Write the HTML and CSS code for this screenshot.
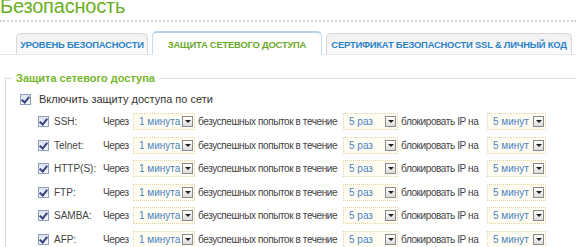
FILE: index.html
```html
<!DOCTYPE html>
<html lang="ru">
<head>
    <meta charset="UTF-8">
    <title>Безопасность</title>
    <link rel="stylesheet" href="styles.css">
</head>
<body>
    <h1 class="page-title">Безопасность</h1>
    <div class="tabs">
        <div class="tab tab-level">УРОВЕНЬ БЕЗОПАСНОСТИ</div>
        <div class="tab tab-net active">ЗАЩИТА СЕТЕВОГО ДОСТУПА</div>
        <div class="tab tab-ssl">СЕРТИФИКАТ БЕЗОПАСНОСТИ SSL &amp; ЛИЧНЫЙ КОД</div>
    </div>

    <fieldset class="group">
        <legend>Защита сетевого доступа</legend>
        <label class="main-check"><span class="check"></span>Включить защиту доступа по сети</label>

        <div class="rules">
            <div class="rule">
                <span class="check"></span><span class="svc">SSH:</span><span class="via">Через</span>
                <div class="select s-time"><span>1 минута</span><i></i></div>
                <span class="txt t-tries">безуспешных попыток в течение</span>
                <div class="select s-count"><span>5 раз</span><i></i></div>
                <span class="txt t-block">блокировать IP на</span>
                <div class="select s-block"><span>5 минут</span><i></i></div>
            </div>
            <div class="rule">
                <span class="check"></span><span class="svc">Telnet:</span><span class="via">Через</span>
                <div class="select s-time"><span>1 минута</span><i></i></div>
                <span class="txt t-tries">безуспешных попыток в течение</span>
                <div class="select s-count"><span>5 раз</span><i></i></div>
                <span class="txt t-block">блокировать IP на</span>
                <div class="select s-block"><span>5 минут</span><i></i></div>
            </div>
            <div class="rule">
                <span class="check"></span><span class="svc">HTTP(S):</span><span class="via">Через</span>
                <div class="select s-time"><span>1 минута</span><i></i></div>
                <span class="txt t-tries">безуспешных попыток в течение</span>
                <div class="select s-count"><span>5 раз</span><i></i></div>
                <span class="txt t-block">блокировать IP на</span>
                <div class="select s-block"><span>5 минут</span><i></i></div>
            </div>
            <div class="rule">
                <span class="check"></span><span class="svc">FTP:</span><span class="via">Через</span>
                <div class="select s-time"><span>1 минута</span><i></i></div>
                <span class="txt t-tries">безуспешных попыток в течение</span>
                <div class="select s-count"><span>5 раз</span><i></i></div>
                <span class="txt t-block">блокировать IP на</span>
                <div class="select s-block"><span>5 минут</span><i></i></div>
            </div>
            <div class="rule">
                <span class="check"></span><span class="svc">SAMBA:</span><span class="via">Через</span>
                <div class="select s-time"><span>1 минута</span><i></i></div>
                <span class="txt t-tries">безуспешных попыток в течение</span>
                <div class="select s-count"><span>5 раз</span><i></i></div>
                <span class="txt t-block">блокировать IP на</span>
                <div class="select s-block"><span>5 минут</span><i></i></div>
            </div>
            <div class="rule">
                <span class="check"></span><span class="svc">AFP:</span><span class="via">Через</span>
                <div class="select s-time"><span>1 минута</span><i></i></div>
                <span class="txt t-tries">безуспешных попыток в течение</span>
                <div class="select s-count"><span>5 раз</span><i></i></div>
                <span class="txt t-block">блокировать IP на</span>
                <div class="select s-block"><span>5 минут</span><i></i></div>
            </div>
        </div>
    </fieldset>
</body>
</html>
```

FILE: styles.css
```css
body {
    margin: 0;
    background-color: #fff;
    font-family: "Liberation Sans", Arial, sans-serif;
    font-size: 11px;
    color: #333;
    overflow: hidden;
}
.page-title {
    margin: -6px 0 0 0;
    font-weight: normal;
    font-size: 20px;
    line-height: 24px;
    letter-spacing: -0.2px;
    color: #6ab023;
    padding-bottom: 2px;
    border-bottom: 2px dotted #d4d4d4;
}
.tabs {
    display: flex;
    gap: 4px;
    margin-top: 9px;
    padding-left: 16px;
    align-items: flex-end;
    border-bottom: 1px solid #e6e6e6;
}
.tab {
    box-sizing: border-box;
    height: 21px;
    line-height: 21px;
    text-align: center;
    white-space: nowrap;
    font-size: 9.4px;
    font-weight: bold;
    letter-spacing: -0.2px;
    color: #2c83c8;
    background: linear-gradient(#f0f0f0, #fafafa);
    border: 1px solid #d6d6d6;
    border-bottom: none;
    border-radius: 5px 5px 0 0;
}
.tab-level {
    width: 132px;
}
.tab-net {
    width: 170px;
}
.tab-ssl {
    width: 246px;
}
.tab.active {
    height: 24px;
    line-height: 23px;
    margin-bottom: -1px;
    color: #6aa82a;
    background: #fff;
    border-color: #c8dcee;
    border-top: 2px solid #b5d2ee;
}
.group {
    margin: 17px 0 0 5px;
    padding: 0;
    border: none;
    border-top: 1px solid #dcdcdc;
    border-left: 1px solid #dcdcdc;
}
.group legend {
    margin-left: 6px;
    padding: 0 4px;
    font-size: 11px;
    font-weight: bold;
    color: #74b72a;
}
.main-check {
    display: flex;
    align-items: center;
    gap: 8px;
    margin: 8px 0 0 14px;
    height: 14px;
    white-space: nowrap;
    color: #333;
}
.check {
    flex-shrink: 0;
    display: inline-block;
    width: 9px;
    height: 9px;
    border: 1px solid #8f9fbd;
    background: linear-gradient(#dde2ec, #f5f6fa);
    position: relative;
}
.check::after {
    content: "";
    position: absolute;
    left: 2px;
    top: 0;
    width: 3px;
    height: 6px;
    border: solid #34437f;
    border-width: 0 2px 2px 0;
    transform: rotate(40deg);
}
.rules {
    display: flex;
    flex-direction: column;
    margin-top: 4px;
}
.rule {
    display: flex;
    align-items: center;
    height: 23.5px;
    padding-left: 32px;
    white-space: nowrap;
    font-size: 10px;
    letter-spacing: -0.4px;
    color: #444;
}
.svc {
    width: 49px;
    margin-left: 5px;
    letter-spacing: 0;
}
.via {
    width: 30px;
}
.txt {
    flex-shrink: 0;
    box-sizing: border-box;
}
.t-tries {
    width: 148px;
    padding-left: 3px;
}
.t-block {
    width: 89px;
    padding-left: 3px;
}
.select {
    flex-shrink: 0;
    box-sizing: border-box;
    display: flex;
    align-items: center;
    justify-content: space-between;
    height: 17px;
    padding: 0 1px 0 5px;
    border: 1px dotted #e0d4a8;
    background-color: #fffdf2;
    color: #4a82c2;
    letter-spacing: 0;
}
.select i {
    display: block;
    width: 9px;
    height: 9px;
    border: 1px solid #8a8a8a;
    background: linear-gradient(#fff, #dcdcdc);
    position: relative;
}
.select i::after {
    content: "";
    position: absolute;
    left: 2px;
    top: 3px;
    border-left: 3px solid transparent;
    border-right: 3px solid transparent;
    border-top: 3px solid #222;
}
.s-time {
    width: 62px;
}
.s-count {
    width: 55px;
}
.s-block {
    width: 59px;
}
```
